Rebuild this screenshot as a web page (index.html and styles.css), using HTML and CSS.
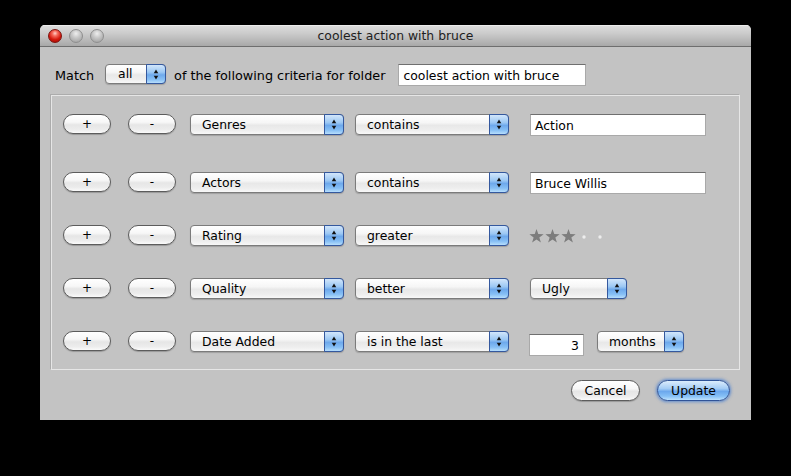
FILE: index.html
```html
<!DOCTYPE html>
<html>
<head>
<meta charset="utf-8">
<title>coolest action with bruce</title>
<link rel="stylesheet" href="styles.css">
</head>
<body>
<svg class="defs" width="0" height="0" aria-hidden="true">
  <defs>
    <symbol id="arrows" viewBox="0 0 20 19">
      <polygon points="7.5,8 12.5,8 10,4" fill="#111"/>
      <polygon points="7.5,11 12.5,11 10,15" fill="#111"/>
    </symbol>
    <symbol id="star" viewBox="0 0 14 14">
      <polygon points="7,0 8.65,4.74 13.66,4.84 9.66,7.87 11.11,12.66 7,9.8 2.89,12.66 4.34,7.87 0.34,4.84 5.35,4.74"/>
    </symbol>
  </defs>
</svg>
<div class="window">
  <div class="titlebar">
    <div class="lights">
      <span class="light red"></span>
      <span class="light gray"></span>
      <span class="light gray"></span>
    </div>
    <div class="title">coolest action with bruce</div>
    <div></div>
  </div>
  <div class="content">
    <div class="match-row">
      <span class="label label-match">Match</span>
      <div class="popup popup-all"><span class="popup-text">all</span><span class="popup-arrows"><svg width="20" height="19"><use href="#arrows"/></svg></span></div>
      <span class="label label-mid">of the following criteria for folder</span>
      <div class="field field-folder">coolest action with bruce</div>
    </div>

    <div class="criteria">
      <div class="row">
        <button class="pill pill-small">+</button>
        <button class="pill pill-small pill-minus">-</button>
        <div class="popup popup-key"><span class="popup-text">Genres</span><span class="popup-arrows"><svg width="20" height="19"><use href="#arrows"/></svg></span></div>
        <div class="popup popup-op"><span class="popup-text">contains</span><span class="popup-arrows"><svg width="20" height="19"><use href="#arrows"/></svg></span></div>
        <div class="field field-value">Action</div>
      </div>
      <div class="row row-second">
        <button class="pill pill-small">+</button>
        <button class="pill pill-small pill-minus">-</button>
        <div class="popup popup-key"><span class="popup-text">Actors</span><span class="popup-arrows"><svg width="20" height="19"><use href="#arrows"/></svg></span></div>
        <div class="popup popup-op"><span class="popup-text">contains</span><span class="popup-arrows"><svg width="20" height="19"><use href="#arrows"/></svg></span></div>
        <div class="field field-value">Bruce Willis</div>
      </div>
      <div class="row">
        <button class="pill pill-small">+</button>
        <button class="pill pill-small pill-minus">-</button>
        <div class="popup popup-key"><span class="popup-text">Rating</span><span class="popup-arrows"><svg width="20" height="19"><use href="#arrows"/></svg></span></div>
        <div class="popup popup-op"><span class="popup-text">greater</span><span class="popup-arrows"><svg width="20" height="19"><use href="#arrows"/></svg></span></div>
        <svg class="stars" width="80" height="17" viewBox="0 0 80 17">
          <use href="#star" x="0" y="1" width="15" height="15"/>
          <use href="#star" x="16" y="1" width="15" height="15"/>
          <use href="#star" x="32" y="1" width="15" height="15"/>
          <circle cx="55" cy="9" r="1.7" fill="#ededed"/>
          <circle cx="71" cy="9" r="1.7" fill="#ededed"/>
        </svg>
      </div>
      <div class="row">
        <button class="pill pill-small">+</button>
        <button class="pill pill-small pill-minus">-</button>
        <div class="popup popup-key"><span class="popup-text">Quality</span><span class="popup-arrows"><svg width="20" height="19"><use href="#arrows"/></svg></span></div>
        <div class="popup popup-op"><span class="popup-text">better</span><span class="popup-arrows"><svg width="20" height="19"><use href="#arrows"/></svg></span></div>
        <div class="popup popup-quality"><span class="popup-text">Ugly</span><span class="popup-arrows"><svg width="20" height="19"><use href="#arrows"/></svg></span></div>
      </div>
      <div class="row">
        <button class="pill pill-small">+</button>
        <button class="pill pill-small pill-minus">-</button>
        <div class="popup popup-key"><span class="popup-text">Date Added</span><span class="popup-arrows"><svg width="20" height="19"><use href="#arrows"/></svg></span></div>
        <div class="popup popup-op"><span class="popup-text">is in the last</span><span class="popup-arrows"><svg width="20" height="19"><use href="#arrows"/></svg></span></div>
        <div class="field field-num">3</div>
        <div class="popup popup-unit"><span class="popup-text">months</span><span class="popup-arrows"><svg width="20" height="19"><use href="#arrows"/></svg></span></div>
      </div>
    </div>

    <div class="actions">
      <button class="pill pill-cancel">Cancel</button>
      <button class="pill pill-default">Update</button>
    </div>
  </div>
</div>
</body>
</html>
```

FILE: styles.css
```css
html, body {
  margin: 0;
  padding: 0;
}

body {
  background: #000;
  width: 791px;
  height: 476px;
  overflow: hidden;
  font-family: "DejaVu Sans", Verdana, sans-serif;
  font-size: 12.4px;
  color: #000;
}

.defs {
  position: absolute;
  width: 0;
  height: 0;
}

.window {
  margin: 25px 0 0 40px;
  width: 711px;
  height: 395px;
  background: #c3c3c3;
  border-radius: 5px 5px 0 0;
  overflow: hidden;
}

.titlebar {
  height: 21px;
  display: grid;
  grid-template-columns: 1fr auto 1fr;
  align-items: center;
  background: linear-gradient(#dedede 0%, #cbcbcb 40%, #b4b4b4 80%, #a8a8a8 100%);
  border-bottom: 1px solid #6e6e6e;
  box-shadow: inset 0 1px 0 #ececec;
}

.lights {
  display: flex;
  gap: 7px;
  padding-left: 8px;
}

.light {
  width: 14px;
  height: 14px;
  border-radius: 50%;
  box-sizing: border-box;
}

.light.red {
  background: radial-gradient(circle at 50% 28%, #ffd0c8 0%, #f56a5c 25%, #d4180c 60%, #9a0a04 100%);
  border: 1px solid #7a1410;
}

.light.gray {
  background: radial-gradient(circle at 50% 30%, #eeeeee 0%, #c8c8c8 40%, #a9a9a9 80%, #bdbdbd 100%);
  border: 1px solid #8e8e8e;
}

.title {
  color: #1e1e1e;
  line-height: 21px;
  white-space: nowrap;
}

.content {
  padding: 0 11px;
}

.match-row {
  display: flex;
  align-items: center;
  height: 22px;
  margin-top: 17px;
}

.label {
  font-size: 12.8px;
}

.label-match {
  margin-left: 4px;
  margin-right: 11px;
}

.label-mid {
  margin-left: 8px;
  margin-right: 13px;
  white-space: nowrap;
}

/* Popup buttons */
.popup {
  display: flex;
  box-sizing: border-box;
  height: 21px;
  border: 1px solid #7b7b7b;
  border-radius: 4px;
  background: linear-gradient(#ffffff 0%, #f6f6f6 40%, #e8e8e8 55%, #eeeeee 80%, #f8f8f8 100%);
  box-shadow: 0 1px 1px rgba(0, 0, 0, 0.18);
  flex: none;
}

.popup-text {
  flex: 1;
  padding-left: 11px;
  line-height: 19px;
  white-space: nowrap;
  overflow: hidden;
}

.popup-arrows {
  width: 20px;
  height: 21px;
  box-sizing: border-box;
  margin: -1px -1px -1px 0;
  border: 1px solid #34589e;
  border-radius: 0 4px 4px 0;
  background: linear-gradient(#d2e6fb 0%, #9cc8f4 40%, #6ea9ec 55%, #86bff5 80%, #b7defc 100%);
  display: flex;
  align-items: center;
  justify-content: center;
}

.popup-arrows svg {
  display: block;
}

.popup-all {
  width: 61px;
  height: 20px;
  margin-top: -2px;
}

.popup-all .popup-text {
  padding-left: 12px;
  line-height: 18px;
}

.popup-all .popup-arrows {
  height: 20px;
}

.popup-key {
  width: 154px;
  margin-left: 14px;
}

.popup-op {
  width: 154px;
  margin-left: 11px;
}

.popup-quality {
  width: 97px;
  margin-left: 21px;
}

.popup-unit {
  width: 87px;
  margin-left: 13px;
}

/* Text fields */
.field {
  box-sizing: border-box;
  height: 22px;
  background: #fff;
  border: 1px solid #a9a9a9;
  border-top-color: #6f6f6f;
  padding: 1px 4px 0;
  line-height: 20px;
  white-space: nowrap;
  flex: none;
}

.field-folder {
  width: 188px;
}

.field-value {
  width: 176px;
  margin-left: 21px;
  margin-top: 2px;
}

.field-num {
  width: 55px;
  margin-left: 20px;
  margin-top: 8px;
  text-align: right;
}

/* Criteria box */
.criteria {
  margin-top: 9px;
  border: 1px solid #e6e6e6;
  box-shadow: -1px -1px 0 #acacac;
  padding: 17px 0 17px 11px;
}

.row {
  display: flex;
  align-items: center;
  height: 22px;
  margin-top: 31px;
}

.row:first-child {
  margin-top: 0;
}

.row.row-second {
  margin-top: 36px;
}

.stars {
  margin-left: 20px;
  margin-top: 2px;
  fill: #7d7d7d;
  display: block;
}

/* Pill buttons */
.pill {
  font-family: inherit;
  font-size: inherit;
  color: #000;
  box-sizing: border-box;
  padding: 0;
  border: 1px solid #5c5c5c;
  border-radius: 11px;
  background: linear-gradient(#ffffff 0%, #f7f7f7 40%, #e6e6e6 55%, #ececec 80%, #fafafa 100%);
  box-shadow: 0 1px 1px rgba(0, 0, 0, 0.22);
  flex: none;
}

.pill-small {
  width: 48px;
  height: 20px;
  line-height: 18px;
  font-size: 12px;
}

.pill-minus {
  margin-left: 17px;
}

.actions {
  display: flex;
  justify-content: flex-end;
  gap: 17px;
  margin-top: 10px;
  padding-right: 10px;
}

.pill-cancel {
  width: 69px;
  height: 21px;
  line-height: 19px;
}

.pill-default {
  width: 73px;
  height: 21px;
  line-height: 19px;
  border-color: #2f5398;
  background: linear-gradient(#dcedfc 0%, #a4ccf5 40%, #6ca8ed 55%, #86c0f6 80%, #bfe2fd 100%);
  box-shadow: 0 0 3px 1px rgba(60, 120, 210, 0.7);
}
```
